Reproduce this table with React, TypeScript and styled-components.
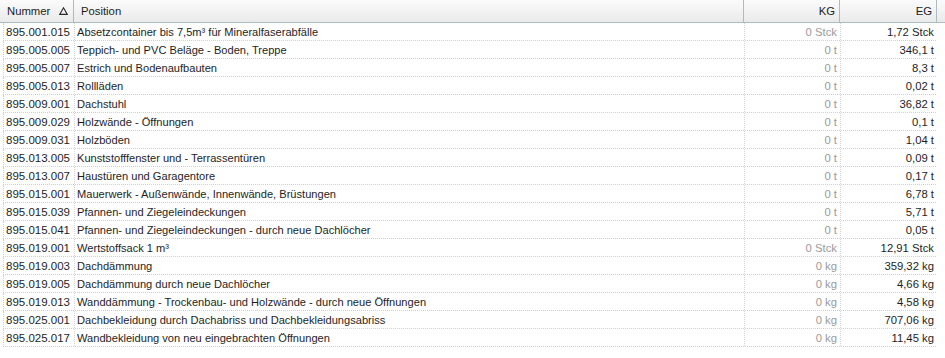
import React from "react";
import styled, { createGlobalStyle } from "styled-components";

const Global = createGlobalStyle`
  html, body { margin: 0; padding: 0; background: #ffffff; }
  body { font-family: "Liberation Sans", Arial, sans-serif; font-size: 11px; color: #1e1e1e; }
`;

const COLS = "74px 670px 96px 97px 1fr";

const Grid = styled.div`
  width: 945px;
  height: 358px;
  background: #ffffff;
  overflow: hidden;
`;

const Header = styled.div`
  display: grid;
  grid-template-columns: ${COLS};
  height: 22px;
  background: linear-gradient(#fbfbfb, #eaeaea);
  border-bottom: 1px solid #a9bfbf;
`;

const HeadCell = styled.div<{ $align?: "left" | "right" }>`
  display: flex;
  align-items: center;
  justify-content: ${(p) => (p.$align === "right" ? "flex-end" : "space-between")};
  padding: 0 4px 0 7px;
  border-right: 1px solid #a9bfbf;
  font-size: 11.3px;
  color: #1e1e1e;
  white-space: nowrap;
`;

const SortIcon = styled.svg`
  width: 9px;
  height: 8px;
  margin-right: 1px;
`;

const Body = styled.div`
  margin-left: 3px;
  width: 933px;
`;

const Row = styled.div`
  display: grid;
  grid-template-columns: 71px 670px 96px 96px;
  height: 18px;
  border-bottom: 1px dotted #cfcfcf;
  border-left: 1px dotted #cfcfcf;
  box-sizing: border-box;
`;

const Cell = styled.div<{ $align?: "left" | "right"; $muted?: boolean; $size?: number }>`
  display: flex;
  align-items: center;
  justify-content: ${(p) => (p.$align === "right" ? "flex-end" : "flex-start")};
  padding: ${(p) => (p.$align === "right" ? "0 3px 0 0" : "0 0 0 2px")};
  border-right: 1px dotted #d3d3d3;
  font-size: ${(p) => p.$size ?? 11.3}px;
  color: ${(p) => (p.$muted ? "#9a9a9a" : "#1e1e1e")};
  white-space: nowrap;
  overflow: hidden;
`;

const LastCell = styled(Cell)`
  border-right: none;
`;

type Item = { nr: string; pos: string; kg: string; eg: string };

const rows: Item[] = [
  { nr: "895.001.015", pos: "Absetzcontainer bis 7,5m³ für Mineralfaserabfälle", kg: "0 Stck", eg: "1,72 Stck" },
  { nr: "895.005.005", pos: "Teppich- und PVC Beläge - Boden, Treppe", kg: "0 t", eg: "346,1 t" },
  { nr: "895.005.007", pos: "Estrich und Bodenaufbauten", kg: "0 t", eg: "8,3 t" },
  { nr: "895.005.013", pos: "Rollläden", kg: "0 t", eg: "0,02 t" },
  { nr: "895.009.001", pos: "Dachstuhl", kg: "0 t", eg: "36,82 t" },
  { nr: "895.009.029", pos: "Holzwände - Öffnungen", kg: "0 t", eg: "0,1 t" },
  { nr: "895.009.031", pos: "Holzböden", kg: "0 t", eg: "1,04 t" },
  { nr: "895.013.005", pos: "Kunststofffenster und - Terrassentüren", kg: "0 t", eg: "0,09 t" },
  { nr: "895.013.007", pos: "Haustüren und Garagentore", kg: "0 t", eg: "0,17 t" },
  { nr: "895.015.001", pos: "Mauerwerk - Außenwände, Innenwände, Brüstungen", kg: "0 t", eg: "6,78 t" },
  { nr: "895.015.039", pos: "Pfannen- und Ziegeleindeckungen", kg: "0 t", eg: "5,71 t" },
  { nr: "895.015.041", pos: "Pfannen- und Ziegeleindeckungen - durch neue Dachlöcher", kg: "0 t", eg: "0,05 t" },
  { nr: "895.019.001", pos: "Wertstoffsack 1 m³", kg: "0 Stck", eg: "12,91 Stck" },
  { nr: "895.019.003", pos: "Dachdämmung", kg: "0 kg", eg: "359,32 kg" },
  { nr: "895.019.005", pos: "Dachdämmung durch neue Dachlöcher", kg: "0 kg", eg: "4,66 kg" },
  { nr: "895.019.013", pos: "Wanddämmung - Trockenbau- und Holzwände - durch neue Öffnungen", kg: "0 kg", eg: "4,58 kg" },
  { nr: "895.025.001", pos: "Dachbekleidung durch Dachabriss und Dachbekleidungsabriss", kg: "0 kg", eg: "707,06 kg" },
  { nr: "895.025.017", pos: "Wandbekleidung von neu eingebrachten Öffnungen", kg: "0 kg", eg: "11,45 kg" },
];

export default function App() {
  return (
    <>
      <Global />
      <Grid>
        <Header>
          <HeadCell>
            <span>Nummer</span>
            <SortIcon viewBox="0 0 9 8">
              <path d="M4.5 0.8 L8.3 7.4 L0.7 7.4 Z" fill="none" stroke="#2a2a2a" strokeWidth="1.1" />
            </SortIcon>
          </HeadCell>
          <HeadCell>
            <span>Position</span>
          </HeadCell>
          <HeadCell $align="right">KG</HeadCell>
          <HeadCell $align="right">EG</HeadCell>
          <div />
        </Header>
        <Body>
          {rows.map((r) => (
            <Row key={r.nr}>
              <Cell $size={11.5}>{r.nr}</Cell>
              <Cell $size={11.1}>{r.pos}</Cell>
              <Cell $align="right" $muted>{r.kg}</Cell>
              <LastCell $align="right">{r.eg}</LastCell>
            </Row>
          ))}
        </Body>
      </Grid>
    </>
  );
}
